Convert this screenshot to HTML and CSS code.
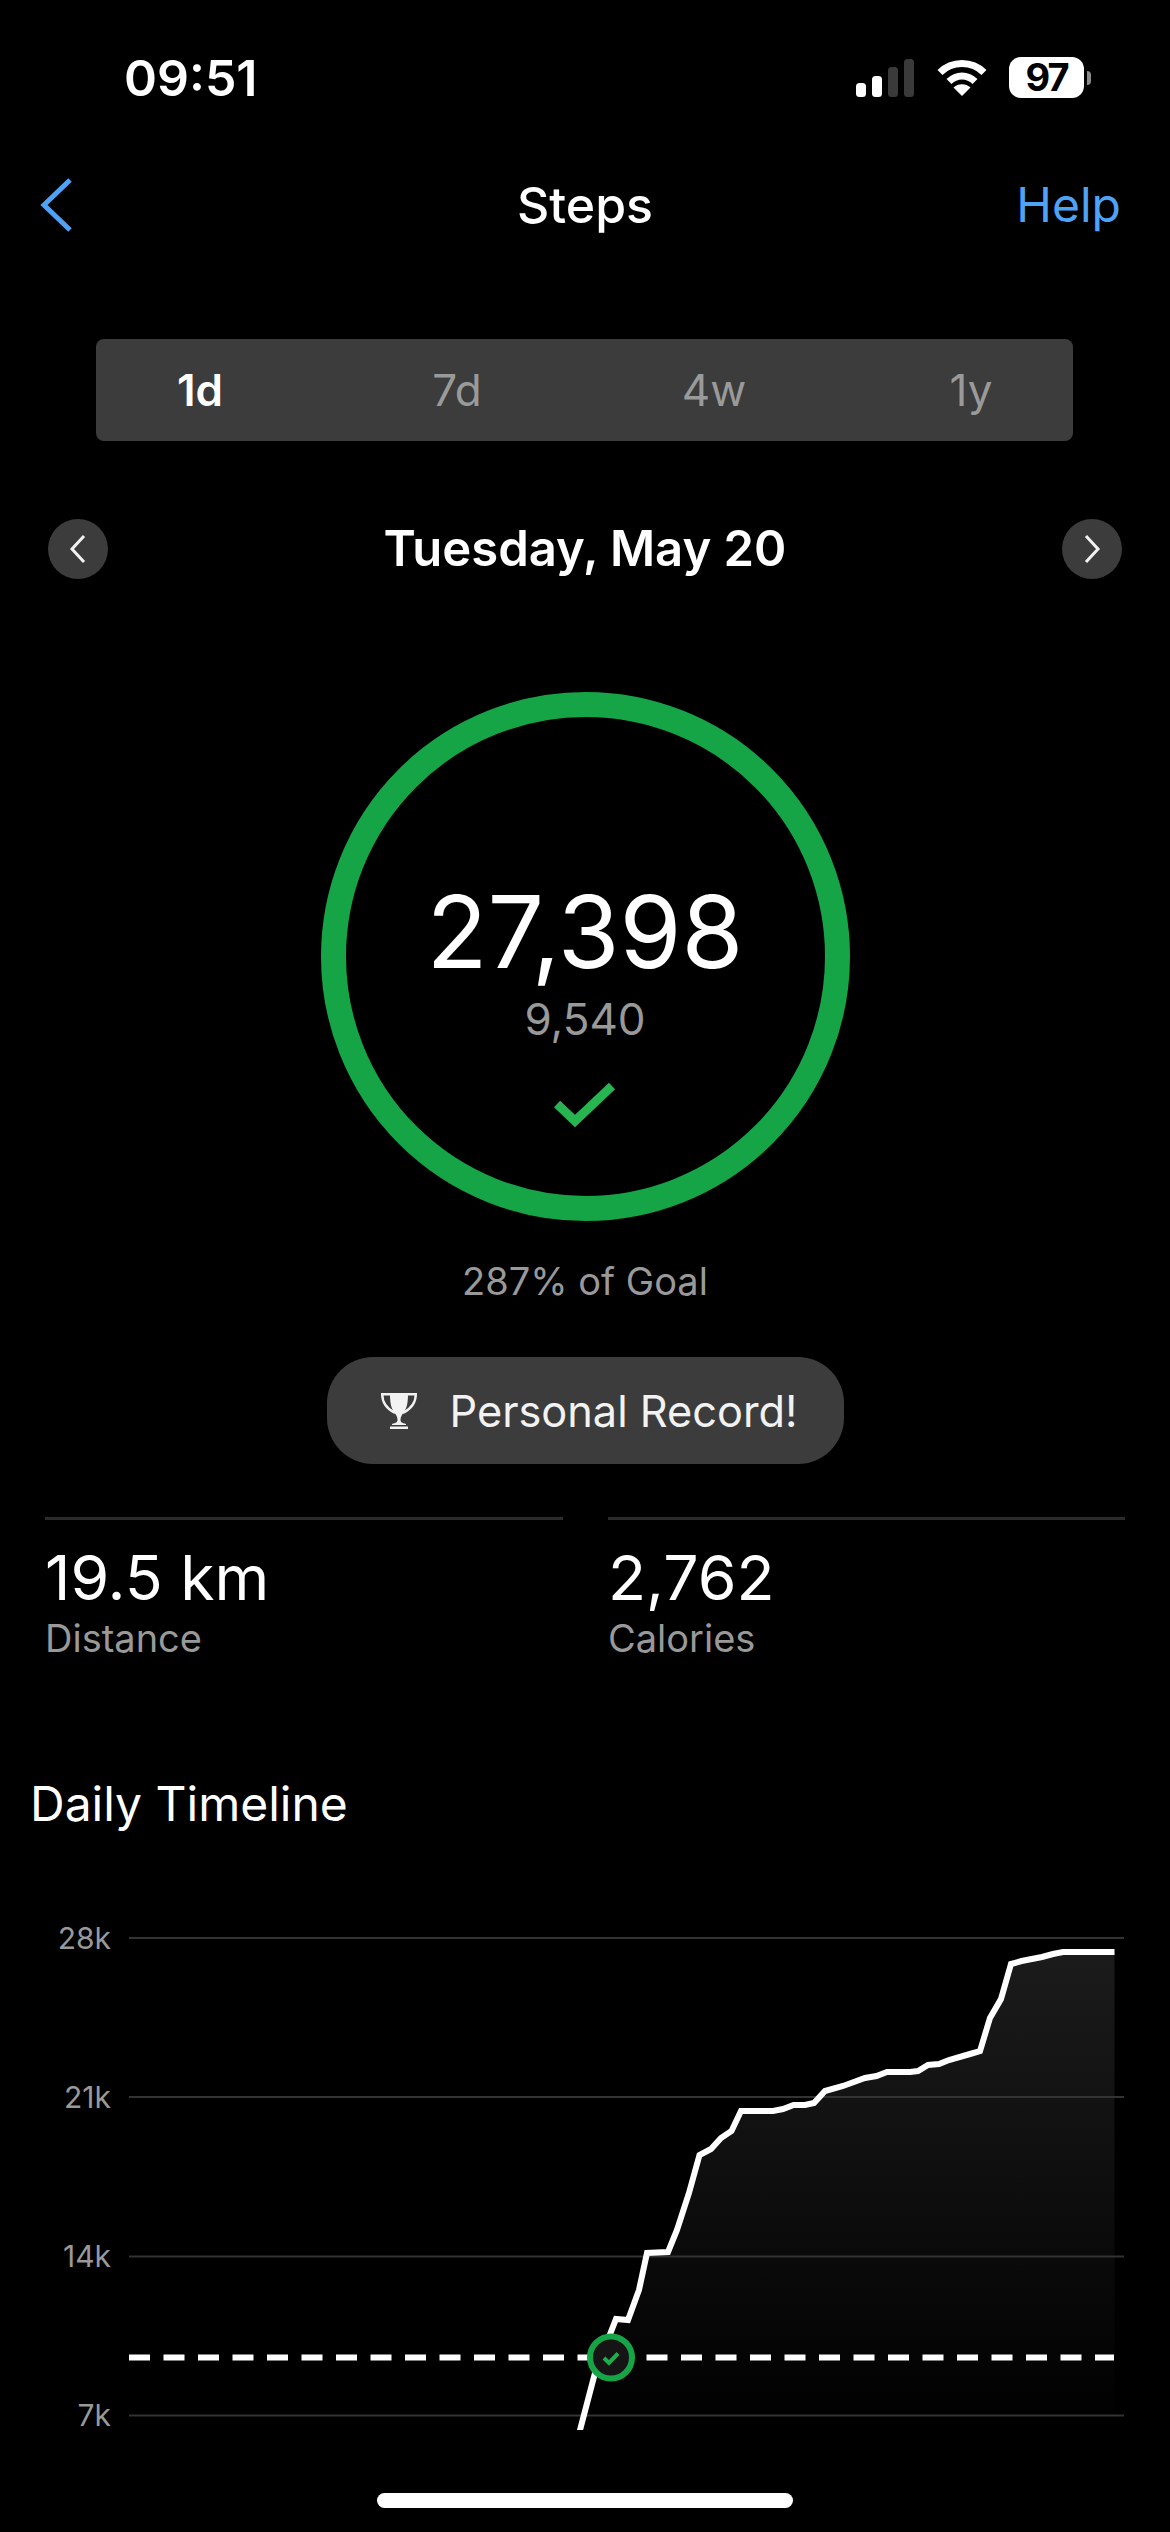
FILE: index.html
```html
<!DOCTYPE html>
<html lang="en">
<head>
<meta charset="utf-8">
<title>Steps</title>
<link rel="stylesheet" href="styles.css">
</head>
<body>
<div class="screen">
  <header class="status">
    <span class="time">09:51</span>
    <div class="status-icons">
      <svg class="signal" width="60" height="38" viewBox="0 0 60 38">
        <rect class="on" x="0" y="24" width="10" height="14" rx="3.5"/>
        <rect class="on" x="16" y="17" width="10" height="21" rx="3.5"/>
        <rect class="off" x="32" y="8" width="10" height="30" rx="3.5"/>
        <rect class="off" x="48" y="0" width="10" height="38" rx="3.5"/>
      </svg>
      <svg class="wifi" width="50" height="38" viewBox="0 0 50 38">
        <path class="arc" d="M3 13.5 C15 1.5 35 1.5 47 13.5"/>
        <path class="arc" d="M12 22.5 C19.5 15 30.5 15 38 22.5"/>
        <path class="dot" d="M25 37 L16.500 28.500 C21 24 29 24 33.500 28.500 Z"/>
      </svg>
      <div class="battery"><span class="battery-level">97</span></div>
      <span class="battery-nub"></span>
    </div>
  </header>

  <nav class="nav">
    <svg class="back" width="34" height="56" viewBox="0 0 34 56"><path d="M31 3 L5 28 L31 53"/></svg>
    <h1 class="nav-title">Steps</h1>
    <a class="nav-help">Help</a>
  </nav>

  <div class="segments">
    <span class="segment active">1d</span>
    <span class="segment">7d</span>
    <span class="segment">4w</span>
    <span class="segment">1y</span>
  </div>

  <div class="date-row">
    <button class="round-btn"><svg width="18" height="30" viewBox="0 0 18 30"><path d="M15 2 L3 15 L15 28"/></svg></button>
    <span class="date">Tuesday, May 20</span>
    <button class="round-btn"><svg width="18" height="30" viewBox="0 0 18 30"><path d="M3 2 L15 15 L3 28"/></svg></button>
  </div>

  <section class="ring">
    <span class="ring-value">27,398</span>
    <span class="ring-goal">9,540</span>
    <svg class="ring-check" width="62" height="46" viewBox="0 0 62 46"><path d="M3 22 L21 39 L58 4"/></svg>
  </section>

  <p class="percent">287% of Goal</p>

  <div class="pill">
    <svg class="trophy" width="36" height="36" viewBox="0 0 36 36">
      <path class="trophy-cup" d="M9 0 H27 C27 8 26.500 15 22 20.500 C20 23 19.500 25 19.500 27 C19.500 29 21 30 25 31 V32 H11 V31 C15 30 16.500 29 16.500 27 C16.500 25 16 23 14 20.500 C9.500 15 9 8 9 0 Z"/>
      <path class="trophy-handle" d="M9 1.200 H1.200 C1.200 9 4.500 15 14 20"/>
      <path class="trophy-handle" d="M27 1.200 H34.800 C34.800 9 31.500 15 22 20"/>
      <rect class="trophy-cup" x="9" y="33.500" width="18" height="2.500"/>
    </svg>
    <span>Personal Record!</span>
  </div>

  <div class="stats">
    <div class="stat">
      <span class="stat-value">19.5 km</span>
      <span class="stat-label">Distance</span>
    </div>
    <div class="stat">
      <span class="stat-value">2,762</span>
      <span class="stat-label">Calories</span>
    </div>
  </div>

  <h2 class="timeline-title">Daily Timeline</h2>

  <svg class="chart" width="1170" height="545" viewBox="0 1900 1170 545">
    <defs>
      <linearGradient id="areaFill" x1="0" y1="1952" x2="0" y2="2432" gradientUnits="userSpaceOnUse">
        <stop offset="0" stop-color="#1b1b1b"/>
        <stop offset="1" stop-color="#000000"/>
      </linearGradient>
      <clipPath id="plotClip"><rect x="0" y="1900" width="1170" height="530"/></clipPath>
    </defs>
    <path clip-path="url(#plotClip)" fill="url(#areaFill)" d="M579.500 2432 L595 2373 L616 2319 L628 2320 L639 2290 L647 2253 L668 2252 L677 2230 L689 2193 L699.500 2155 L711 2149 L721 2138 L731.500 2131 L741 2111 L773 2111 L783 2109 L793.600 2105 L805 2105 L814 2103 L825 2091 L843 2086 L865 2078 L876.500 2076 L887 2072 L910 2072 L918 2071 L928 2065 L939 2064 L949 2060 L970 2054 L980 2051 L990 2018 L1001 1999 L1011 1964 L1021.600 1961 L1042 1957 L1053 1954 L1063 1952 L1114.500 1952 V2432 Z"/>
    <g class="grid">
      <line x1="129" x2="1124" y1="1938" y2="1938"/>
      <line x1="129" x2="1124" y1="2097" y2="2097"/>
      <line x1="129" x2="1124" y1="2256.500" y2="2256.500"/>
      <line x1="129" x2="1124" y1="2415.500" y2="2415.500"/>
    </g>
    <g class="axis">
      <text x="111" y="1949">28k</text>
      <text x="111" y="2108">21k</text>
      <text x="111" y="2267">14k</text>
      <text x="111" y="2426">7k</text>
    </g>
    <path class="goal-line" d="M129 2357.500 H1114"/>
    <path clip-path="url(#plotClip)" class="steps-line" d="M579.500 2432 L595 2373 L616 2319 L628 2320 L639 2290 L647 2253 L668 2252 L677 2230 L689 2193 L699.500 2155 L711 2149 L721 2138 L731.500 2131 L741 2111 L773 2111 L783 2109 L793.600 2105 L805 2105 L814 2103 L825 2091 L843 2086 L865 2078 L876.500 2076 L887 2072 L910 2072 L918 2071 L928 2065 L939 2064 L949 2060 L970 2054 L980 2051 L990 2018 L1001 1999 L1011 1964 L1021.600 1961 L1042 1957 L1053 1954 L1063 1952 L1114.500 1952"/>
    <circle class="goal-marker" cx="611" cy="2357.500" r="21"/>
    <path class="goal-check" d="M604 2358 L609 2363 L618 2353.500"/>
  </svg>

  <div class="home-indicator"></div>
</div>
</body>
</html>
```
FILE: styles.css
```css
* { box-sizing: border-box; }
html, body { margin: 0; padding: 0; background: #000; }
body { font-family: Inter, "Liberation Sans", sans-serif; color: #fff; }
.screen { width: 1170px; height: 2532px; overflow: hidden; background: #000; }

.status { height: 130px; display: flex; justify-content: space-between; padding: 48px 79px 0 124px; }
.time { font-size: 50px; font-weight: 600; line-height: 60px; height: 60px; }
.status-icons { display: flex; align-items: flex-start; padding-top: 9px; }
.signal { margin-top: 2px; }
.signal .on { fill: #fff; }
.signal .off { fill: #3a3a3a; }
.wifi { margin: 2px 0 0 21px; }
.wifi .arc { fill: none; stroke: #fff; stroke-width: 7; }
.wifi .dot { fill: #fff; }
.battery { width: 75px; height: 41px; margin-left: 22px; border-radius: 12px; background: #fff; display: flex; align-items: center; justify-content: center; }
.battery-level { color: #000; font-size: 38px; font-weight: 700; line-height: 41px; letter-spacing: -2px; }
.battery-nub { width: 4px; height: 14px; margin: 14px 0 0 3px; background: #8a8a8a; border-radius: 0 4px 4px 0; }

.nav { height: 70px; margin-top: 40px; display: grid; grid-template-columns: 1fr auto 1fr; align-items: center; padding: 0 49px; }
.back { margin-left: -10px; }
.back path { fill: none; stroke: #4fa3f7; stroke-width: 5; }
.nav-title { margin: 0; font-size: 50px; font-weight: 500; line-height: 70px; }
.nav-help { justify-self: end; color: #4fa3f7; font-size: 48px; line-height: 70px; }

.segments { width: 977px; height: 102px; margin: 99px 0 0 96px; border-radius: 8px; background: #3c3c3c; display: flex; gap: 177px; align-items: center; padding-left: 64px; }
.segment { width: 80px; text-align: center; color: #9a9a9a; font-size: 44px; line-height: 50px; }
.segment.active { color: #fff; font-weight: 600; }

.date-row { height: 60px; margin-top: 78px; padding: 0 48px; display: flex; justify-content: space-between; align-items: center; }
.round-btn { width: 60px; height: 60px; padding: 0; border: 0; border-radius: 50%; background: #3c3c3c; display: flex; align-items: center; justify-content: center; }
.round-btn path { fill: none; stroke: #f2f2f2; stroke-width: 3; }
.date { font-size: 49px; font-weight: 600; line-height: 60px; color: #fff; }

.ring { width: 529px; height: 529px; margin: 113px auto 0; border: 25px solid #16a546; border-radius: 50%; display: flex; flex-direction: column; align-items: center; padding-top: 165px; }
.ring-value { font-size: 100px; line-height: 100px; color: #fff; }
.ring-goal { font-size: 44px; line-height: 50px; color: #999; margin-top: 12px; }
.ring-check { margin-top: 38px; }
.ring-check path { fill: none; stroke: #26b551; stroke-width: 9; }

.percent { margin: 35px 0 0; height: 50px; text-align: center; color: #999; font-size: 38px; line-height: 50px; }

.pill { width: 517px; height: 107px; margin: 51px auto 0; padding-left: 54px; border-radius: 46px; background: #3c3c3c; display: flex; align-items: center; gap: 33px; font-size: 43.300px; color: #f2f2f2; }
.trophy { flex: none; }
.trophy-cup { fill: #f2f2f2; }
.trophy-handle { fill: none; stroke: #f2f2f2; stroke-width: 2.400; }

.stats { margin: 53px 45px 0; display: grid; grid-template-columns: 518px 517px; column-gap: 45px; }
.stat { border-top: 3px solid #2b2b2b; display: flex; flex-direction: column; padding-top: 22px; }
.stat-value { font-size: 62.500px; line-height: 70px; }
.stat-label { font-size: 38px; line-height: 46px; color: #999; margin-top: 3px; }

.timeline-title { margin: 113px 0 0 30px; font-size: 48px; font-weight: 400; line-height: 60px; }

.chart { display: block; margin-top: 66px; }
.grid line { stroke: #333; stroke-width: 2; }
.axis text { fill: #999; font-size: 30px; text-anchor: end; font-family: Inter, "Liberation Sans", sans-serif; }
.goal-line { fill: none; stroke: #fff; stroke-width: 6; stroke-dasharray: 21 13.500; }
.steps-line { fill: none; stroke: #fff; stroke-width: 6; stroke-linejoin: miter; }
.goal-marker { fill: #151515; stroke: #16a546; stroke-width: 6; }
.goal-check { fill: none; stroke: #1fae4d; stroke-width: 4; }

.home-indicator { width: 416px; height: 15px; margin: 48px auto 0; border-radius: 8px; background: #fff; }
```
